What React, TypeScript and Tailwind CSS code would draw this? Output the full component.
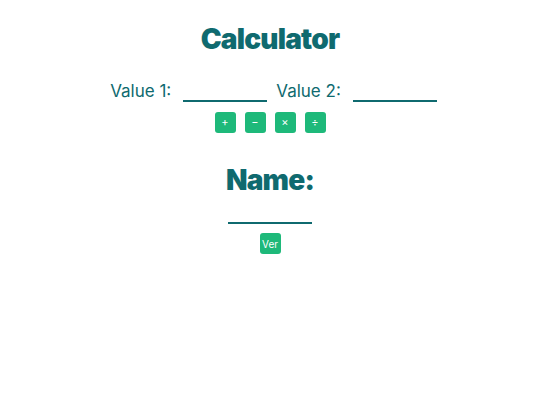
import React from "react";

export default function App() {
  return (
    <div className="w-[540px] h-[405px] bg-white flex flex-col items-center text-[#0f6a6f]" style={{ fontFamily: "Inter, 'Noto Sans', sans-serif" }}>
      <h1 className="mt-[22px] text-[28px] leading-[34px] font-black tracking-[-0.8px]">Calculator</h1>
      <div className="mt-[24px] flex items-end pl-[7px]">
        <span className="text-[17px] leading-[22px] font-normal">Value 1:</span>
        <div className="ml-[12px] w-[84px] h-[20px] border-b-2 border-[#0f6a6f]" />
        <span className="ml-[9px] text-[17px] leading-[22px] font-normal">Value 2:</span>
        <div className="ml-[12px] w-[84px] h-[20px] border-b-2 border-[#0f6a6f]" />
      </div>
      <div className="mt-[10px] flex gap-[9px]">
        {["+", "−", "×", "÷"].map((s) => (
          <button key={s} className="w-[21px] h-[21px] rounded-[3px] bg-[#1eb97a] text-white text-[11px] leading-none flex items-center justify-center">{s}</button>
        ))}
      </div>
      <h2 className="mt-[30px] text-[28px] leading-[34px] font-black tracking-[-0.8px]">Name:</h2>
      <div className="mt-[25px] w-[84px] h-[2px] bg-[#0f6a6f]" />
      <button className="mt-[9px] w-[21px] h-[21px] rounded-[3px] bg-[#1eb97a] text-white text-[10px] leading-none flex items-center justify-center">Ver</button>
    </div>
  );
}
